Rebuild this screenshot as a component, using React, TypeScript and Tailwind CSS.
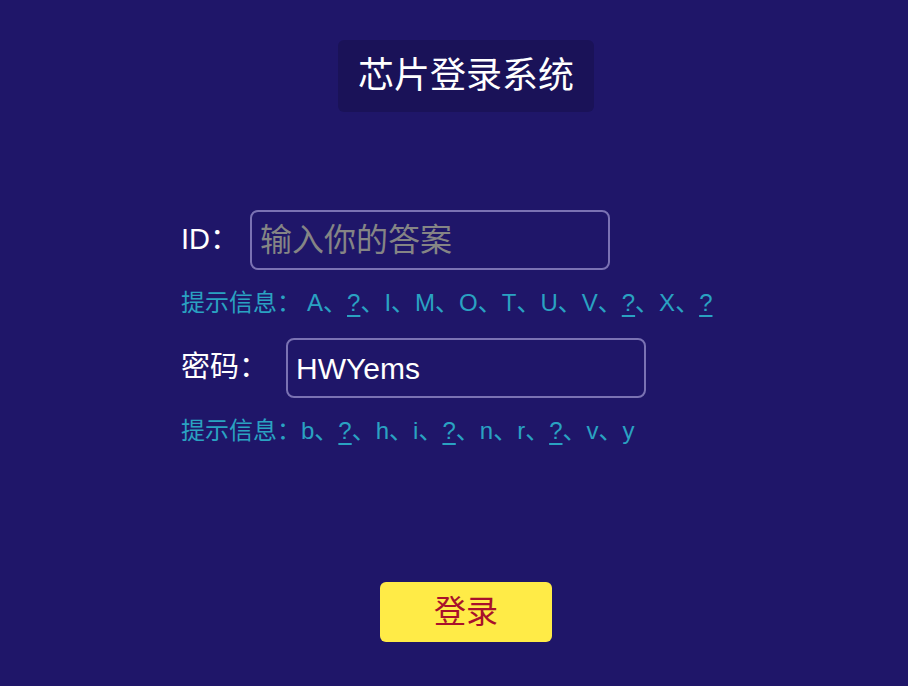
import React from "react";

const F = "font-['Liberation_Sans','Noto_Sans_CJK_SC',sans-serif]";

function Hint({ items, lead }: { items: string[]; lead?: boolean }) {
  return (
    <div className="mt-[17px] h-[32px] flex items-center text-[24px] text-[#2aa2c2] leading-[32px] whitespace-pre">
      <span>提示信息：</span>
      {lead ? <span className="w-[6px]" /> : null}
      {items.map((it, i) => (
        <React.Fragment key={i}>
          {it === "?" ? (
            <span className="underline underline-offset-[4px] decoration-[2px]">?</span>
          ) : (
            <span>{it}</span>
          )}
          {i < items.length - 1 ? <span>、</span> : null}
        </React.Fragment>
      ))}
    </div>
  );
}

export default function App() {
  return (
    <div className={`${F} w-[908px] h-[686px] bg-[#1f1669] flex flex-col items-center overflow-hidden pl-[24px]`}>
      <div className="mt-[40px] h-[72px] w-[256px] rounded-[6px] bg-[#1a1258] flex items-center justify-center text-white text-[36px]">
        芯片登录系统
      </div>
      <div className="w-[570px] flex flex-col mt-[98px]">
        <div className="flex items-center h-[60px]">
          <span className="text-white text-[29px] w-[69px]">ID：</span>
          <div className="w-[360px] h-[60px] rounded-[8px] border-2 border-[#7a72b3] flex items-center px-[8px]">
            <span className="text-[#858585] text-[32px]">输入你的答案</span>
          </div>
        </div>
        <Hint lead items={["A", "?", "I", "M", "O", "T", "U", "V", "?", "X", "?"]} />
        <div className="flex items-center h-[60px] mt-[19px]">
          <span className="text-white text-[29px] w-[105px]">密码：</span>
          <div className="w-[360px] h-[60px] rounded-[8px] border-2 border-[#7a72b3] flex items-center px-[8px]">
            <span className="text-white text-[30px]">HWYems</span>
          </div>
        </div>
        <Hint items={["b", "?", "h", "i", "?", "n", "r", "?", "v", "y"]} />
      </div>
      <div className="mt-[135px] w-[172px] h-[60px] rounded-[6px] bg-[#ffeb47] flex items-center justify-center text-[#a8112b] text-[32px]">
        登录
      </div>
    </div>
  );
}
